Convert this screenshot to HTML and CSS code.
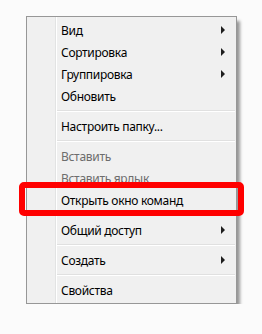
FILE: index.html
```html
<!DOCTYPE html>
<html lang="ru">
<head>
    <meta charset="UTF-8">
    <title>Контекстное меню</title>
    <link rel="stylesheet" href="styles.css">
</head>
<body>
    <div class="menu">
        <div class="item has-sub">Вид</div>
        <div class="item has-sub">Сортировка</div>
        <div class="item has-sub">Группировка</div>
        <div class="item">Обновить</div>
        <div class="sep"></div>
        <div class="item">Настроить папку...</div>
        <div class="sep"></div>
        <div class="item disabled">Вставить</div>
        <div class="item disabled">Вставить ярлык</div>
        <div class="item marked">Открыть окно команд</div>
        <div class="sep"></div>
        <div class="item has-sub">Общий доступ</div>
        <div class="sep"></div>
        <div class="item has-sub">Создать</div>
        <div class="sep"></div>
        <div class="item">Свойства</div>
    </div>
</body>
</html>
```

FILE: styles.css
```css
body {
    margin: 0;
    padding: 16px 0 0 26px;
    background-color: #fbfbfb;
    font-family: "Noto Sans", "Liberation Sans", sans-serif;
    font-size: 12px;
    letter-spacing: -0.3px;
}

.menu {
    width: 209px;
    padding: 2px 0;
    background-color: #f0f0f0;
    border: 1px solid #979797;
    box-shadow: 4px 4px 3px -1px rgba(0, 0, 0, 0.4);
    position: relative;
}

/* колонка под иконки */
.menu::before {
    content: "";
    position: absolute;
    top: 0;
    bottom: 0;
    left: 28px;
    width: 1px;
    background-color: #e2e3e3;
    border-right: 1px solid #ffffff;
}

.item {
    position: relative;
    display: flex;
    align-items: center;
    height: 22px;
    padding-left: 34px;
    color: #000;
}

.item.disabled { color: #6d6d6d; }

.item.has-sub::after {
    content: "";
    margin-left: auto;
    margin-right: 11px;
    border-left: 4px solid #1e1e1e;
    border-top: 4px solid transparent;
    border-bottom: 4px solid transparent;
}

.item.marked::after {
    content: "";
    position: absolute;
    left: -8px;
    right: -8px;
    top: -7px;
    bottom: -5px;
    border: 6px solid #ff0000;
    border-radius: 5px;
}

.sep {
    height: 8px;
    margin-left: 30px;
    margin-right: 1px;
    display: flex;
    flex-direction: column;
    justify-content: center;
}

.sep::before {
    content: "";
    height: 1px;
    background-color: #e0e0e0;
    border-bottom: 1px solid #ffffff;
}
```
